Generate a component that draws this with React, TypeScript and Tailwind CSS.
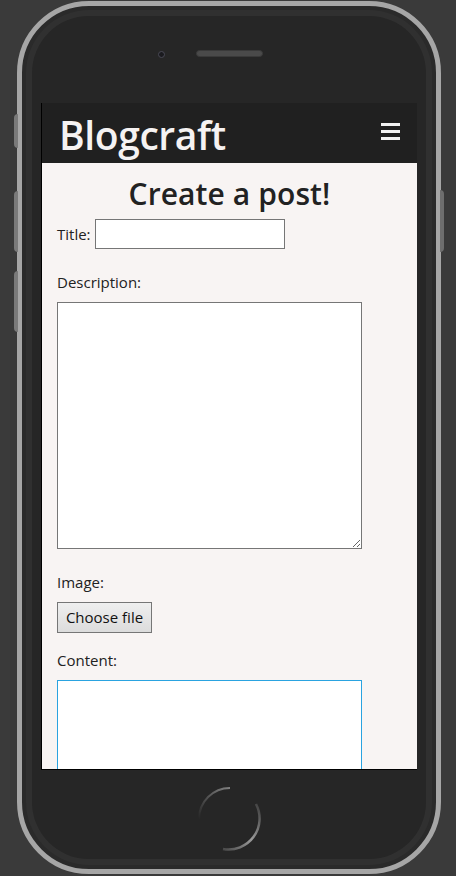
import React from "react";

function HomeButton() {
  return (
    <svg width="70" height="70" viewBox="0 0 70 70">
      <defs>
        <linearGradient id="hbA" x1="1" y1="0" x2="0" y2="1">
          <stop offset="0" stopColor="#8a8a8a" stopOpacity="0.9" />
          <stop offset="1" stopColor="#8a8a8a" stopOpacity="0" />
        </linearGradient>
        <linearGradient id="hbB" x1="1" y1="0" x2="0" y2="1">
          <stop offset="0" stopColor="#9a9a9a" stopOpacity="0.2" />
          <stop offset="0.5" stopColor="#9a9a9a" stopOpacity="1" />
          <stop offset="1" stopColor="#9a9a9a" stopOpacity="0.3" />
        </linearGradient>
      </defs>
      {/* upper-left arc */}
      <path d="M35 4 A31 31 0 0 0 4 35" fill="none" stroke="url(#hbA)" strokeWidth="2" />
      {/* lower-right arc */}
      <path d="M61 20 A31 31 0 0 1 28 65" fill="none" stroke="url(#hbB)" strokeWidth="2.5" />
    </svg>
  );
}

function Field({ label, children }: { label: string; children: React.ReactNode }) {
  return (
    <div className="flex flex-col">
      <label className="text-[15px] leading-[21px] text-[#222]">{label}</label>
      <div className="mt-[9px]">{children}</div>
    </div>
  );
}

export default function App() {
  return (
    <div
      className="w-[456px] h-[876px] bg-[#3a3a3a] overflow-hidden pt-px pl-[17px]"
      style={{ fontFamily: '"Open Sans", "Noto Sans", sans-serif' }}
    >
      <div className="relative w-[424px] h-[873px] rounded-[72px] border-[5px] border-[#a6a6a6] bg-[#262626] shadow-[inset_0_0_0_4px_#2a2a2a,inset_0_0_0_10px_#303030]">
        {/* side buttons */}
        <div className="absolute left-[-8px] top-[108px] w-[4px] h-[34px] rounded-l bg-[#7a7a7a]" />
        <div className="absolute left-[-8px] top-[185px] w-[4px] h-[61px] rounded-l bg-[#7a7a7a]" />
        <div className="absolute left-[-8px] top-[265px] w-[4px] h-[61px] rounded-l bg-[#7a7a7a]" />
        <div className="absolute right-[-8px] top-[184px] w-[4px] h-[62px] rounded-r bg-[#6e6e6e]" />

        {/* top: camera + speaker */}
        <div className="h-[97px] flex items-start pt-[44px] pl-[136px] gap-[31px]">
          <div className="w-[7px] h-[7px] rounded-full bg-[#1a1a1e] border border-[#4a4a55] mt-[1px]" />
          <div className="w-[67px] h-[7px] rounded-full bg-[#4a4a4a] border border-[#3a3a3a]" />
        </div>

        {/* screen */}
        <div className="ml-[19px] w-[376px] h-[667px] border-l border-b border-black overflow-hidden bg-[#f8f4f3]">
          <header className="h-[60px] bg-[#202020] flex items-center justify-between pl-[17px] pr-[17px]">
            <span className="text-[39px] font-semibold text-[#f5f2f2] leading-none mt-[2px] tracking-[-0.4px]">
              Blogcraft
            </span>
            <div className="flex flex-col gap-[4px] -mt-[4px]">
              <div className="w-[19px] h-[3px] bg-[#f2f2f2]" />
              <div className="w-[19px] h-[3px] bg-[#f2f2f2]" />
              <div className="w-[19px] h-[3px] bg-[#f2f2f2]" />
            </div>
          </header>

          <div className="px-[15px]">
            <h1 className="text-center text-[30px] font-semibold text-[#222] leading-[40px] mt-[11px] tracking-[0.1px]">
              Create a post!
            </h1>
            <div className="flex items-center gap-[4px] mt-[5px]">
              <label className="text-[15px] text-[#222]">Title:</label>
              <input className="w-[190px] h-[30px] bg-white border border-[#767676] outline-none px-1" />
            </div>

            <div className="mt-[23px]">
              <Field label="Description:">
                <textarea className="block w-[305px] h-[247px] bg-white border border-[#767676] outline-none resize" />
              </Field>
            </div>

            <div className="mt-[23px]">
              <Field label="Image:">
                <button className="w-[95px] h-[31px] bg-gradient-to-b from-[#efefef] to-[#dcdcdc] border border-[#767676] text-[15px] text-[#111] leading-none">
                  Choose file
                </button>
              </Field>
            </div>

            <div className="mt-[17px]">
              <Field label="Content:">
                <textarea className="block w-[305px] h-[247px] bg-white border border-[#2aa3e0] outline-none" />
              </Field>
            </div>
          </div>
        </div>

        {/* home button */}
        <div className="flex justify-center pt-[14px] pl-[1px]">
          <HomeButton />
        </div>
      </div>
    </div>
  );
}
